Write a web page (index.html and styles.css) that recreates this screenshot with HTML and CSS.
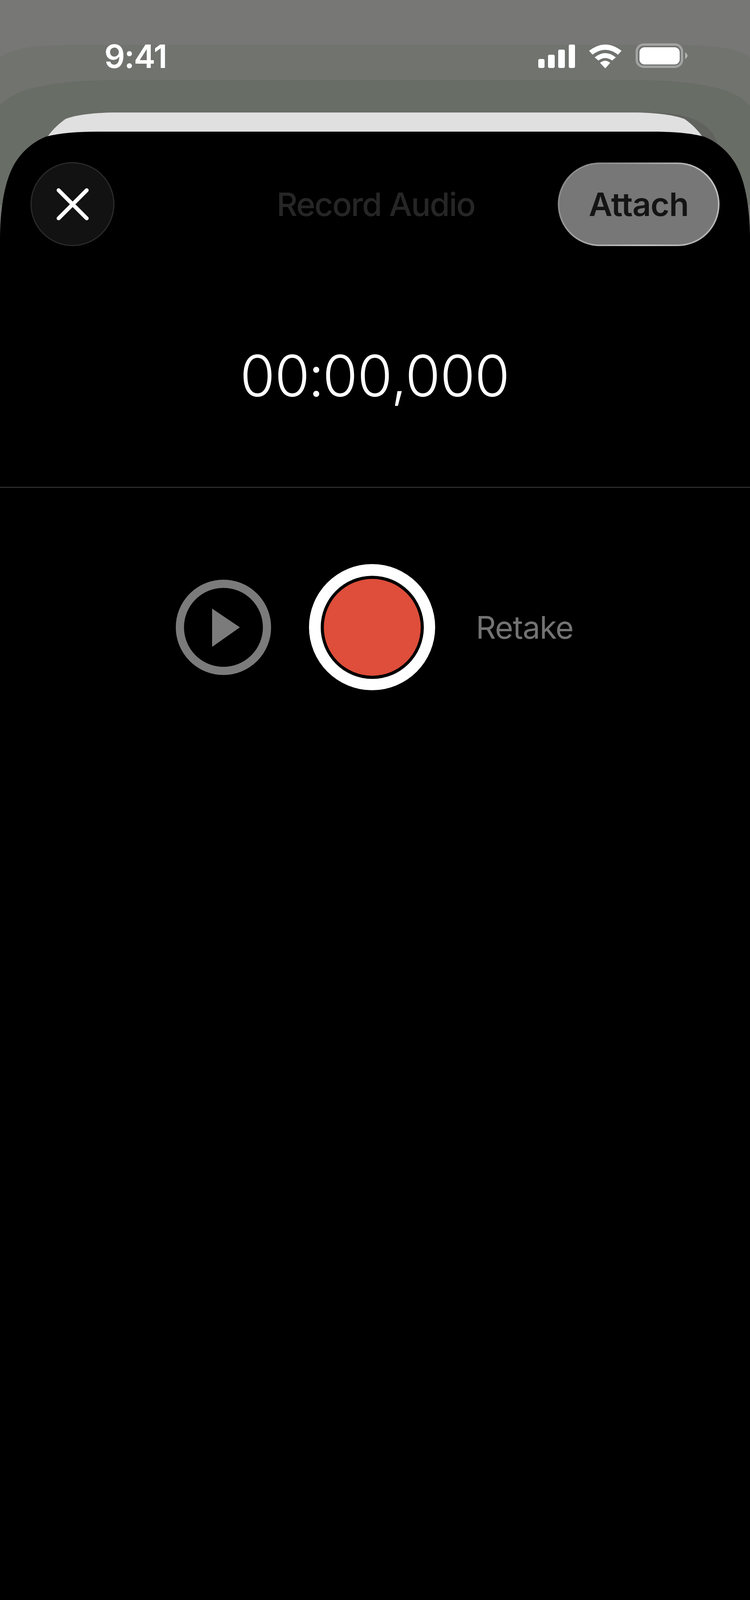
FILE: index.html
```html
<!DOCTYPE html>
<html lang="en">
<head>
<meta charset="utf-8">
<title>Record Audio</title>
<link rel="stylesheet" href="styles.css">
</head>
<body>
<div class="screen">
  <div class="backdrop backdrop-one"></div>
  <div class="backdrop backdrop-two"></div>
  <div class="backdrop card-shadow"></div>
  <div class="backdrop card"></div>

  <header class="status">
    <span class="time">9:41</span>
    <div class="status-icons">
      <svg class="signal" viewBox="0 0 94 61" width="94" height="61" aria-hidden="true">
        <rect x="0" y="37" width="16" height="23" rx="4"/>
        <rect x="25" y="26" width="17" height="34" rx="4"/>
        <rect x="51" y="13" width="17" height="47" rx="4"/>
        <rect x="78" y="0" width="16" height="60" rx="4"/>
      </svg>
      <svg class="wifi" viewBox="0 0 83 61" width="83" height="61" aria-hidden="true">
        <path d="M0 16Q41.500-16 83 16L74 26Q41.500 1 9 26Z"/>
        <path d="M14.500 33Q41.500 11 68.500 33L59 41Q41.500 28 24 41Z"/>
        <path d="M28 47Q41.500 36 54 47L41.500 61Z"/>
      </svg>
      <div class="battery">
        <div class="battery-shell"><div class="battery-level"></div></div>
        <svg class="battery-nub" viewBox="0 0 7 19" width="7" height="19" aria-hidden="true"><path d="M0 0L5 6Q7 9.500 5 13L0 19Z"/></svg>
      </div>
    </div>
  </header>

  <main class="sheet">
    <div class="sheet-header">
      <button class="close" type="button" aria-label="Close">
        <svg viewBox="0 0 82 82" width="82" height="82" aria-hidden="true"><path d="M5 5L77 77M77 5L5 77"/></svg>
      </button>
      <h1 class="title">Record Audio</h1>
      <button class="attach" type="button">Attach</button>
    </div>

    <div class="timer">00:00,000</div>
    <div class="divider"></div>

    <div class="controls">
      <svg class="play" viewBox="0 0 244 244" width="244" height="244" aria-hidden="true">
        <circle cx="122" cy="122" r="111.500"/>
        <path d="M93 74L164 122L93 172Z"/>
      </svg>
      <div class="record">
        <div class="record-gap"><div class="record-dot"></div></div>
      </div>
      <span class="retake">Retake</span>
    </div>
  </main>
</div>
</body>
</html>
```
FILE: styles.css
```css
* { box-sizing: border-box; }

html, body {
  margin: 0;
  padding: 0;
  background: #000;
}

.screen {
  position: relative;
  display: flex;
  flex-direction: column;
  width: 1920px;
  height: 4162px;
  overflow: hidden;
  background: #777775;
  font-family: Inter, "Liberation Sans", sans-serif;
}

.backdrop {
  position: absolute;
  left: 0;
  width: 1920px;
}

.backdrop-one {
  top: 115px;
  height: 320px;
  background: #71736f;
  clip-path: path("M0 32C30 10 80 0 200 0L1720 0C1840 0 1890 10 1920 32L1920 320L0 320Z");
}

.backdrop-two {
  top: 205px;
  height: 320px;
  background: #686d66;
  clip-path: path("M0 66C20 40 80 0 300 0L1620 0C1840 0 1900 40 1920 66L1920 320L0 320Z");
}

.card-shadow {
  top: 288px;
  height: 130px;
  background: #60625e;
  clip-path: path("M1640 0L1690 1C1745 4 1790 15 1817 45C1828 58 1836 72 1840 90L1840 130L1640 130Z");
}

.card {
  top: 288px;
  height: 120px;
  background: #e0e0e0;
  clip-path: path("M100 120C105 82 125 47 167 17C190 7 240 0 300 0L1620 0C1680 0 1730 7 1753 17C1795 47 1815 82 1820 120Z");
}

.status {
  position: relative;
  display: flex;
  align-items: flex-start;
  justify-content: space-between;
  height: 337px;
  padding: 102px 159px 0 267px;
  color: #fff;
}

.time {
  font-size: 83px;
  line-height: 84px;
  font-weight: 600;
  letter-spacing: -2px;
}

.status-icons {
  display: flex;
  align-items: flex-start;
  gap: 36px;
  padding-top: 9px;
}

.signal, .wifi, .battery-nub {
  display: block;
  fill: #fff;
}

.signal {
  margin-top: 3px;
}

.wifi {
  margin-top: 3px;
}

.battery {
  display: flex;
  align-items: center;
  gap: 5px;
  margin-left: 0;
}

.battery-shell {
  display: flex;
  align-items: center;
  justify-content: center;
  width: 122px;
  height: 63px;
  border: 6px solid #a3a3a3;
  border-radius: 21px;
}

.battery-level {
  width: 103px;
  height: 44px;
  background: #fff;
  border-radius: 13px;
}

.battery-nub {
  fill: #b5b5b5;
}

.sheet {
  position: relative;
  flex: 1;
  background: #000;
  clip-path: path("M0 270C1 200 10 135 33 90C50 57 80 28 117 13C155 3 200 0 250 0L1670 0C1720 0 1765 3 1803 13C1840 28 1870 57 1887 90C1910 135 1919 200 1920 270L1920 3825L0 3825Z");
}

.sheet-header {
  display: grid;
  grid-template-columns: 1fr auto 1fr;
  align-items: center;
  padding: 78px 78px 0;
}

.close {
  display: flex;
  align-items: center;
  justify-content: center;
  justify-self: start;
  width: 215px;
  height: 215px;
  padding: 0;
  background: #121212;
  border: 3px solid #2b2b2b;
  border-radius: 50%;
}

.close svg {
  display: block;
  fill: none;
  stroke: #fff;
  stroke-width: 10;
  stroke-linecap: round;
}

.title {
  margin: 0;
  padding-left: 4px;
  color: #262626;
  font-size: 83px;
  line-height: 100px;
  font-weight: 550;
  letter-spacing: -2.200px;
}

.attach {
  justify-self: end;
  width: 414px;
  height: 214px;
  padding: 0;
  color: #141414;
  font-family: inherit;
  font-size: 83px;
  font-weight: 600;
  letter-spacing: -1px;
  background:
    linear-gradient(#777, #777) padding-box,
    linear-gradient(135deg, #8c8c8c 20%, #c4c4c4 70%, #a8a8a8) border-box;
  border: 4px solid transparent;
  border-radius: 107px;
}

.timer {
  padding: 244px 6px 0 0;
  color: #fff;
  text-align: center;
  font-size: 146px;
  line-height: 176px;
  font-weight: 300;
  letter-spacing: -5.500px;
  font-variant-numeric: tabular-nums;
}

.divider {
  height: 3px;
  margin-top: 196px;
  background: #2b2b2b;
}

.controls {
  display: flex;
  align-items: center;
  justify-content: center;
  padding: 195px 2px 0 0;
}

.play {
  display: block;
  margin-right: 97px;
}

.play circle {
  fill: none;
  stroke: #7b7b7b;
  stroke-width: 21;
}

.play path {
  fill: #7b7b7b;
}

.record {
  display: flex;
  align-items: center;
  justify-content: center;
  width: 323px;
  height: 323px;
  background: #fff;
  border-radius: 50%;
}

.record-gap {
  display: flex;
  align-items: center;
  justify-content: center;
  width: 264px;
  height: 264px;
  background: #000;
  border-radius: 50%;
}

.record-dot {
  width: 248px;
  height: 248px;
  background: #de4e3a;
  border-radius: 50%;
}

.retake {
  margin-left: 104px;
  color: #737373;
  font-size: 80px;
  line-height: 100px;
  font-weight: 400;
  letter-spacing: -1.300px;
}
```
